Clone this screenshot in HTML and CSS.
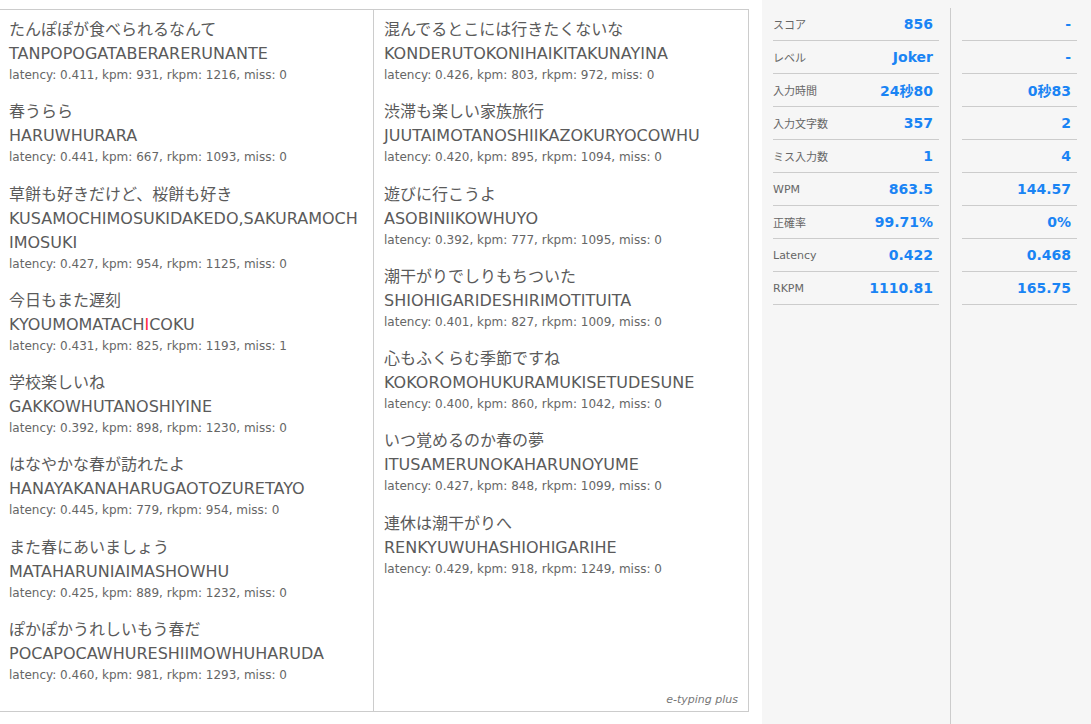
FILE: index.html
```html
<!DOCTYPE html>
<html lang="ja">
<head>
<meta charset="utf-8">
<title>e-typing plus result</title>
<link rel="stylesheet" href="styles.css">
</head>
<body>
<div class="page">
  <div class="words">
    <div class="col col-left">
      <div class="item"><div class="jp">たんぽぽが食べられるなんて</div><div class="roma">TANPOPOGATABERARERUNANTE</div><div class="meta">latency: 0.411, kpm: 931, rkpm: 1216, miss: 0</div></div>
      <div class="item"><div class="jp">春うらら</div><div class="roma">HARUWHURARA</div><div class="meta">latency: 0.441, kpm: 667, rkpm: 1093, miss: 0</div></div>
      <div class="item"><div class="jp">草餅も好きだけど、桜餅も好き</div><div class="roma">KUSAMOCHIMOSUKIDAKEDO,SAKURAMOCHIMOSUKI</div><div class="meta">latency: 0.427, kpm: 954, rkpm: 1125, miss: 0</div></div>
      <div class="item"><div class="jp">今日もまた遅刻</div><div class="roma">KYOUMOMATACH<span class="miss">I</span>COKU</div><div class="meta">latency: 0.431, kpm: 825, rkpm: 1193, miss: 1</div></div>
      <div class="item"><div class="jp">学校楽しいね</div><div class="roma">GAKKOWHUTANOSHIYINE</div><div class="meta">latency: 0.392, kpm: 898, rkpm: 1230, miss: 0</div></div>
      <div class="item"><div class="jp">はなやかな春が訪れたよ</div><div class="roma">HANAYAKANAHARUGAOTOZURETAYO</div><div class="meta">latency: 0.445, kpm: 779, rkpm: 954, miss: 0</div></div>
      <div class="item"><div class="jp">また春にあいましょう</div><div class="roma">MATAHARUNIAIMASHOWHU</div><div class="meta">latency: 0.425, kpm: 889, rkpm: 1232, miss: 0</div></div>
      <div class="item"><div class="jp">ぽかぽかうれしいもう春だ</div><div class="roma">POCAPOCAWHURESHIIMOWHUHARUDA</div><div class="meta">latency: 0.460, kpm: 981, rkpm: 1293, miss: 0</div></div>
    </div>
    <div class="col col-right">
      <div class="item"><div class="jp">混んでるとこには行きたくないな</div><div class="roma">KONDERUTOKONIHAIKITAKUNAYINA</div><div class="meta">latency: 0.426, kpm: 803, rkpm: 972, miss: 0</div></div>
      <div class="item"><div class="jp">渋滞も楽しい家族旅行</div><div class="roma">JUUTAIMOTANOSHIIKAZOKURYOCOWHU</div><div class="meta">latency: 0.420, kpm: 895, rkpm: 1094, miss: 0</div></div>
      <div class="item"><div class="jp">遊びに行こうよ</div><div class="roma">ASOBINIIKOWHUYO</div><div class="meta">latency: 0.392, kpm: 777, rkpm: 1095, miss: 0</div></div>
      <div class="item"><div class="jp">潮干がりでしりもちついた</div><div class="roma">SHIOHIGARIDESHIRIMOTITUITA</div><div class="meta">latency: 0.401, kpm: 827, rkpm: 1009, miss: 0</div></div>
      <div class="item"><div class="jp">心もふくらむ季節ですね</div><div class="roma">KOKOROMOHUKURAMUKISETUDESUNE</div><div class="meta">latency: 0.400, kpm: 860, rkpm: 1042, miss: 0</div></div>
      <div class="item"><div class="jp">いつ覚めるのか春の夢</div><div class="roma">ITUSAMERUNOKAHARUNOYUME</div><div class="meta">latency: 0.427, kpm: 848, rkpm: 1099, miss: 0</div></div>
      <div class="item"><div class="jp">連休は潮干がりへ</div><div class="roma">RENKYUWUHASHIOHIGARIHE</div><div class="meta">latency: 0.429, kpm: 918, rkpm: 1249, miss: 0</div></div>
      <div class="brand">e-typing plus</div>
    </div>
  </div>
  <div class="stats">
    <div class="stat-col stat-main">
      <div class="row"><span class="label">スコア</span><span class="val">856</span></div>
      <div class="row"><span class="label">レベル</span><span class="val">Joker</span></div>
      <div class="row"><span class="label">入力時間</span><span class="val">24秒80</span></div>
      <div class="row"><span class="label">入力文字数</span><span class="val">357</span></div>
      <div class="row"><span class="label">ミス入力数</span><span class="val">1</span></div>
      <div class="row"><span class="label">WPM</span><span class="val">863.5</span></div>
      <div class="row"><span class="label">正確率</span><span class="val">99.71%</span></div>
      <div class="row"><span class="label">Latency</span><span class="val">0.422</span></div>
      <div class="row"><span class="label">RKPM</span><span class="val">1110.81</span></div>
    </div>
    <div class="stat-col stat-sub">
      <div class="row"><span class="val">-</span></div>
      <div class="row"><span class="val">-</span></div>
      <div class="row"><span class="val">0秒83</span></div>
      <div class="row"><span class="val">2</span></div>
      <div class="row"><span class="val">4</span></div>
      <div class="row"><span class="val">144.57</span></div>
      <div class="row"><span class="val">0%</span></div>
      <div class="row"><span class="val">0.468</span></div>
      <div class="row"><span class="val">165.75</span></div>
    </div>
  </div>
</div>
</body>
</html>
```
FILE: styles.css
```css
html, body {
  margin: 0;
  padding: 0;
  background: #fff;
}
body {
  font-family: "DejaVu Sans", "Noto Sans CJK JP", sans-serif;
  color: #5a5a5a;
  width: 1091px;
  height: 724px;
  overflow: hidden;
}
.page {
  display: flex;
  height: 724px;
}
.words {
  margin-top: 9px;
  width: 749px;
  height: 703px;
  border-top: 1px solid #cccccc;
  border-right: 1px solid #cccccc;
  border-bottom: 1px solid #cccccc;
  display: flex;
  box-sizing: border-box;
  flex: none;
}
.col {
  box-sizing: border-box;
  padding-top: 8px;
}
.col-left {
  width: 373px;
  padding-left: 9px;
  padding-right: 13px;
}
.col-right {
  flex: 1;
  border-left: 1px solid #cccccc;
  padding-left: 10px;
  padding-right: 8px;
  position: relative;
}
.item {
  margin-bottom: 16.3px;
}
.jp, .roma {
  font-size: 16px;
  line-height: 24px;
  color: #5a5a5a;
}
.roma {
  word-break: break-all;
}
.miss {
  color: #ff1f3d;
}
.meta {
  font-size: 12px;
  line-height: 18px;
  color: #666;
}
.brand {
  position: absolute;
  right: 10px;
  bottom: 5px;
  font-size: 11px;
  font-style: italic;
  color: #777;
}
.stats {
  margin-left: 13px;
  flex: 1;
  background: #f6f6f6;
  display: flex;
  padding-top: 8px;
  box-sizing: border-box;
}
.stat-col {
  box-sizing: border-box;
}
.stat-main {
  width: 189px;
  padding: 0 11px;
  border-right: 1px solid #cccccc;
}
.stat-sub {
  width: 140px;
  padding: 0 14px 0 11px;
}
.row {
  height: 33px;
  border-bottom: 1px solid #cccccc;
  box-sizing: border-box;
  display: flex;
  align-items: center;
  justify-content: space-between;
  padding-right: 6px;
}
.stat-sub .row {
  justify-content: flex-end;
}
.label {
  font-size: 11px;
  color: #666;
}
.val {
  font-size: 14px;
  font-weight: bold;
  color: #1a84f4;
}
```
